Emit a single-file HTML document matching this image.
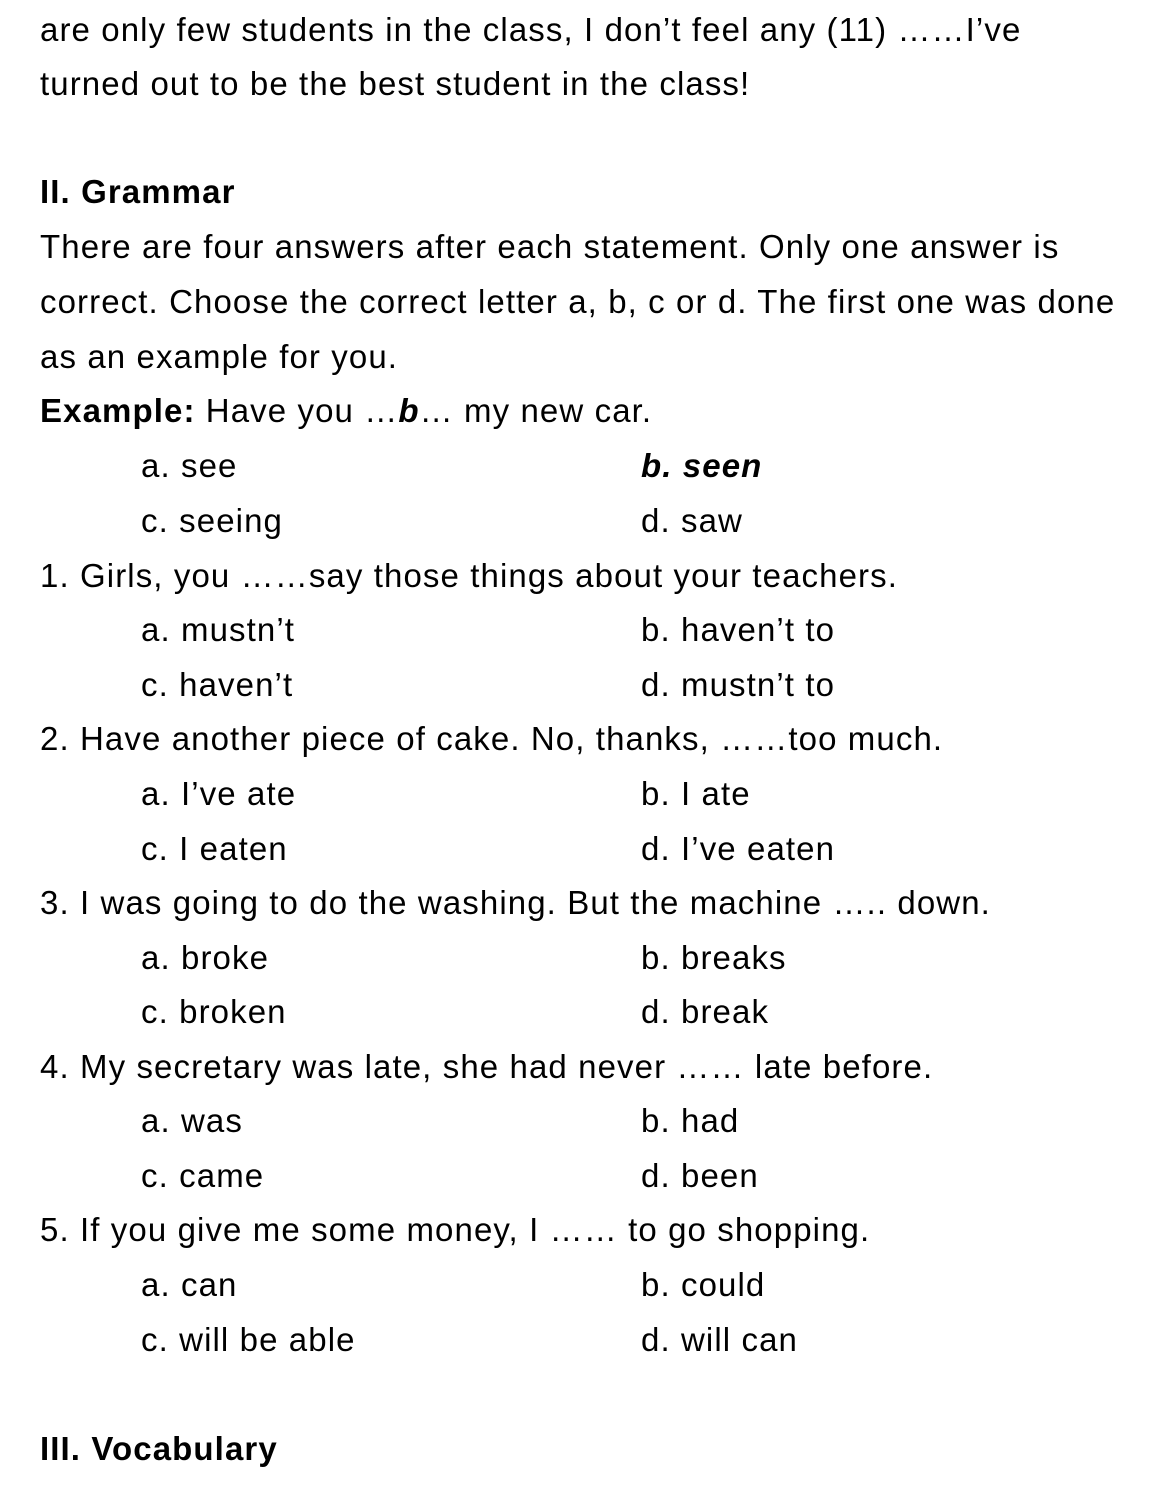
<!DOCTYPE html>
<html><head><meta charset="utf-8"><style>
html,body{margin:0;padding:0;background:#fff;}
body{width:1166px;height:1489px;position:relative;overflow:hidden;font-family:"Liberation Sans",sans-serif;font-size:33px;letter-spacing:1.1px;color:#000;}
.l{position:absolute;left:40px;height:54px;line-height:54px;white-space:nowrap;}
.a{left:141px}.b{left:641px}
</style></head><body>
<div class="l" style="top:3px">are only few students in the class, I don’t feel any (11) ……I’ve</div>
<div class="l" style="top:57px">turned out to be the best student in the class!</div>
<div class="l" style="top:165px"><b>II. Grammar</b></div>
<div class="l" style="top:220px">There are four answers after each statement. Only one answer is</div>
<div class="l" style="top:275px">correct. Choose the correct letter a, b, c or d. The first one was done</div>
<div class="l" style="top:330px">as an example for you.</div>
<div class="l" style="top:384px"><b>Example:</b> Have you …<b><i>b</i></b>… my new car.</div>
<div class="l a" style="top:439px">a. see</div><div class="l b" style="top:439px"><b><i>b. seen</i></b></div>
<div class="l a" style="top:494px">c. seeing</div><div class="l b" style="top:494px">d. saw</div>
<div class="l" style="top:549px">1. Girls, you ……say those things about your teachers.</div>
<div class="l a" style="top:603px">a. mustn’t</div><div class="l b" style="top:603px">b. haven’t to</div>
<div class="l a" style="top:658px">c. haven’t</div><div class="l b" style="top:658px">d. mustn’t to</div>
<div class="l" style="top:712px">2. Have another piece of cake. No, thanks, ……too much.</div>
<div class="l a" style="top:767px">a. I’ve ate</div><div class="l b" style="top:767px">b. I ate</div>
<div class="l a" style="top:822px">c. I eaten</div><div class="l b" style="top:822px">d. I’ve eaten</div>
<div class="l" style="top:876px">3. I was going to do the washing. But the machine ….. down.</div>
<div class="l a" style="top:931px">a. broke</div><div class="l b" style="top:931px">b. breaks</div>
<div class="l a" style="top:985px">c. broken</div><div class="l b" style="top:985px">d. break</div>
<div class="l" style="top:1040px">4. My secretary was late, she had never …… late before.</div>
<div class="l a" style="top:1094px">a. was</div><div class="l b" style="top:1094px">b. had</div>
<div class="l a" style="top:1149px">c. came</div><div class="l b" style="top:1149px">d. been</div>
<div class="l" style="top:1203px">5. If you give me some money, I …… to go shopping.</div>
<div class="l a" style="top:1258px">a. can</div><div class="l b" style="top:1258px">b. could</div>
<div class="l a" style="top:1313px">c. will be able</div><div class="l b" style="top:1313px">d. will can</div>
<div class="l" style="top:1422px"><b>III. Vocabulary</b></div>
</body></html>
